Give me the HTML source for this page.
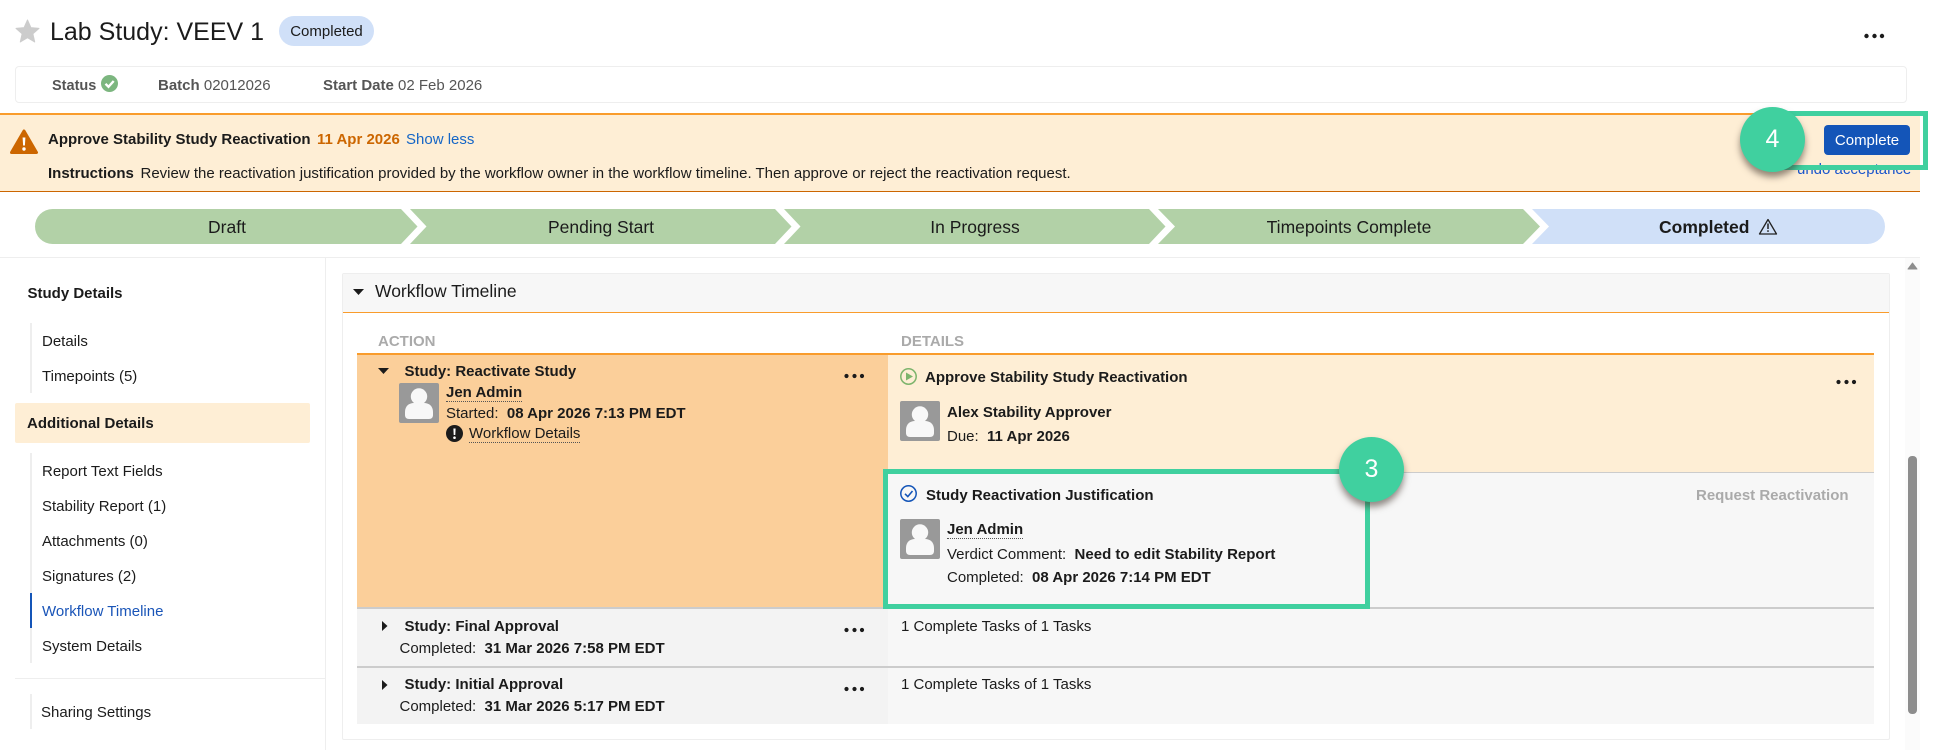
<!DOCTYPE html>
<html><head><meta charset="utf-8"><title>Lab Study: VEEV 1</title>
<style>
html,body{margin:0;padding:0;width:1935px;height:750px;overflow:hidden;background:#fff}
body{position:relative;font-family:"Liberation Sans",Arial,sans-serif;font-size:15px;color:#1b1b1b}
.t{position:absolute;white-space:nowrap;line-height:22px;height:22px}
.s{line-height:20px;height:20px}
.b{font-weight:bold}
.r{position:absolute}
.dot{border-bottom:1px dotted #555;height:auto;line-height:17px;padding-bottom:0}
svg{position:absolute;overflow:visible}
.circle{position:absolute;width:65px;height:65px;border-radius:50%;background:#40d09f;color:#fff;font-size:25px;line-height:65px;text-align:center;box-shadow:0 5px 7px rgba(60,50,40,.55)}
.box{position:absolute;border:5px solid #40d09f;box-sizing:border-box}
</style></head><body>

<!-- header -->
<svg style="left:0;top:0" width="60" height="60"><path d="M27.5 20l3.4 7.6 8.1.8-6.1 5.4 1.8 8.2-7.2-4.3-7.2 4.3 1.8-8.2L16 28.400l8.100-.8z" fill="#ccc" stroke="#ccc" stroke-linejoin="round"/></svg>
<div class="t" style="left:50px;top:18px;font-size:25px;line-height:28px;height:28px">Lab Study: VEEV 1</div>
<div class="r" style="left:279px;top:16px;width:95px;height:30px;border-radius:15px;background:#d0e0f8;text-align:center;line-height:32px">Completed</div>
<svg style="left:1860px;top:30px" width="30" height="12"><circle cx="6.500" cy="6" r="2.200" fill="#1b1b1b"/><circle cx="14.500" cy="6" r="2.200" fill="#1b1b1b"/><circle cx="22" cy="6" r="2.200" fill="#1b1b1b"/></svg>

<!-- status bar -->
<div class="r" style="left:15px;top:66px;width:1892px;height:37px;border:1px solid #eee;border-radius:4px;box-sizing:border-box"></div>
<div class="t s b" style="left:52px;top:76px;color:#555;font-size:14.500px">Status</div>
<svg style="left:101px;top:75px" width="18" height="18"><circle cx="8.500" cy="8.500" r="8.500" fill="#7cb67f"/><path d="M4.500 8.800l3 3 5.200-5.800" fill="none" stroke="#fff" stroke-width="2.400"/></svg>
<div class="t" style="left:158px;top:75px;color:#555"><b>Batch</b> 02012026</div>
<div class="t" style="left:323px;top:75px;color:#555"><b>Start Date</b> 02 Feb 2026</div>

<!-- banner -->
<div class="r" style="left:0;top:113px;width:1920px;height:79px;background:#feeed5;border-top:2px solid #f99c2c;border-bottom:1px solid #cc6600;box-sizing:border-box"></div>
<svg style="left:9px;top:128px" width="30" height="28"><path d="M15 3L27.500 24.500H2.500z" fill="#cc6600" stroke="#cc6600" stroke-width="3" stroke-linejoin="round"/><path d="M13.600 9.500h2.800l-.5 8h-1.800z" fill="#fff"/><circle cx="15" cy="21" r="1.700" fill="#fff"/></svg>
<div class="t b" style="left:48px;top:129px">Approve Stability Study Reactivation</div>
<div class="t b" style="left:317px;top:129px;color:#cc6600">11 Apr 2026</div>
<div class="t" style="left:406px;top:129px;color:#1566c6">Show less</div>
<div class="t b" style="left:48px;top:163px">Instructions</div>
<div class="t" style="left:140.500px;top:163px">Review the reactivation justification provided by the workflow owner in the workflow timeline. Then approve or reject the reactivation request.</div>

<!-- Complete -->
<div class="r" style="left:1824px;top:125px;width:86px;height:30px;border-radius:4px;background:#1455b8;color:#fff;text-align:center;line-height:32px">Complete</div>
<div class="t" style="left:1797px;top:159px;color:#1a55cc">undo acceptance</div>
<div class="box" style="left:1772px;top:111px;width:156px;height:59px"></div>
<div class="circle" style="left:1740px;top:107px">4</div>

<!-- stages -->
<svg style="left:0;top:0" width="1935" height="260">
<path d="M401 209L417.500 226.500L401 244H52.500A17.500 17.500 0 0 1 52.500 209Z" fill="#b2d1a7"/>
<path d="M410 209L426.500 226.500L410 244H775L791.500 226.500L775 209Z" fill="#b2d1a7"/>
<path d="M784 209L800.500 226.500L784 244H1149L1165.500 226.500L1149 209Z" fill="#b2d1a7"/>
<path d="M1158 209L1175 226.500L1158 244H1523L1540 226.500L1523 209Z" fill="#b2d1a7"/>
<path d="M1532 209L1549 226.500L1532 244H1867.500A17.500 17.500 0 0 0 1867.500 209Z" fill="#d0e0f8"/>
<path d="M1768 219.500L1776.500 234H1759.500Z" fill="none" stroke="#222" stroke-width="1.300" stroke-linejoin="round"/>
<path d="M1768 223.500v5.500M1768 230.300v1.600" stroke="#222" stroke-width="1.500"/>
</svg>
<div class="t s" style="left:127px;width:200px;top:217px;font-size:17.500px;text-align:center">Draft</div>
<div class="t s" style="left:501px;width:200px;top:217px;font-size:17.500px;text-align:center">Pending Start</div>
<div class="t s" style="left:875px;width:200px;top:217px;font-size:17.500px;text-align:center">In Progress</div>
<div class="t s" style="left:1249px;width:200px;top:217px;font-size:17.500px;text-align:center">Timepoints Complete</div>
<div class="t s b" style="left:1659px;top:217px;font-size:17.500px">Completed</div>

<!-- dividers -->
<div class="r" style="left:0;top:257px;width:1920px;height:1px;background:#eee"></div>
<div class="r" style="left:325px;top:258px;width:1px;height:492px;background:#eee"></div>

<!-- sidebar -->
<div class="t b" style="left:27.500px;top:283px">Study Details</div>
<div class="r" style="left:30px;top:323px;width:2px;height:70px;background:#eee"></div>
<div class="t" style="left:42px;top:331px">Details</div>
<div class="t" style="left:42px;top:366px">Timepoints (5)</div>
<div class="r" style="left:15px;top:403px;width:295px;height:40px;background:#feeed5;border-radius:2px"></div>
<div class="t b" style="left:27px;top:413px">Additional Details</div>
<div class="r" style="left:30px;top:453px;width:2px;height:210px;background:#eee"></div>
<div class="r" style="left:30px;top:593px;width:2px;height:35px;background:#1455b8"></div>
<div class="t" style="left:42px;top:461px">Report Text Fields</div>
<div class="t" style="left:42px;top:496px">Stability Report (1)</div>
<div class="t" style="left:42px;top:531px">Attachments (0)</div>
<div class="t" style="left:42px;top:566px">Signatures (2)</div>
<div class="t" style="left:42px;top:601px;color:#1a55b8">Workflow Timeline</div>
<div class="t" style="left:42px;top:636px">System Details</div>
<div class="r" style="left:15px;top:678px;width:310px;height:1px;background:#eee"></div>
<div class="r" style="left:30px;top:694px;width:2px;height:35px;background:#eee"></div>
<div class="t" style="left:41px;top:702px">Sharing Settings</div>

<!-- panel -->
<div class="r" style="left:342px;top:273px;width:1548px;height:467px;border:1px solid #eee;box-sizing:border-box;border-radius:2px"></div>
<div class="r" style="left:343px;top:274px;width:1546px;height:38px;background:#f7f7f7;border-bottom:1px solid #f99c2c"></div>
<svg style="left:353px;top:288px" width="12" height="8"><path d="M0 1H11L5.500 7Z" fill="#1b1b1b"/></svg>
<div class="t s" style="left:375px;top:281px;font-size:17.500px">Workflow Timeline</div>
<div class="t b" style="left:378px;top:331px;color:#aaa">ACTION</div>
<div class="t b" style="left:901px;top:331px;color:#aaa">DETAILS</div>

<!-- table -->
<div class="r" style="left:357px;top:353px;width:1517px;height:2px;background:#f99c2c"></div>
<div class="r" style="left:357px;top:355px;width:531px;height:252px;background:#fbcf9a"></div>
<div class="r" style="left:888px;top:355px;width:986px;height:117px;background:#feeed5"></div>
<div class="r" style="left:888px;top:472px;width:986px;height:1px;background:#ccc"></div>
<div class="r" style="left:888px;top:473px;width:986px;height:134px;background:#f7f7f7"></div>
<div class="r" style="left:357px;top:607px;width:1517px;height:2px;background:#ccc"></div>
<div class="r" style="left:357px;top:609px;width:531px;height:57px;background:#f3f3f3"></div>
<div class="r" style="left:888px;top:609px;width:986px;height:57px;background:#f7f7f7"></div>
<div class="r" style="left:357px;top:666px;width:1517px;height:2px;background:#ccc"></div>
<div class="r" style="left:357px;top:668px;width:531px;height:56px;background:#f3f3f3"></div>
<div class="r" style="left:888px;top:668px;width:986px;height:56px;background:#f7f7f7"></div>

<!-- action main -->
<svg style="left:378px;top:367px" width="12" height="8"><path d="M0 1H11L5.500 7Z" fill="#1b1b1b"/></svg>
<div class="t b" style="left:404.500px;top:361px">Study: Reactivate Study</div>
<svg style="left:399px;top:383px" width="40" height="40"><rect width="40" height="40" rx="2" fill="#999"/><circle cx="20" cy="13.500" r="8.200" fill="#f8f8f8"/><path d="M6 29c0-6 4-9 9-9h10c5 0 9 3 9 9v3c0 2.500-1.500 4-4 4H10c-2.500 0-4-1.500-4-4z" fill="#f8f8f8"/></svg>
<div class="t b dot" style="left:446px;top:384px">Jen Admin</div>
<div class="t" style="left:446px;top:403px">Started:&nbsp; <b>08 Apr 2026 7:13 PM EDT</b></div>
<svg style="left:446px;top:425px" width="18" height="18"><circle cx="8.500" cy="8.500" r="8.500" fill="#1b1b1b"/><path d="M7.400 3.500h2.200l-.3 6.500H7.700z" fill="#fff"/><circle cx="8.500" cy="12.700" r="1.300" fill="#fff"/></svg>
<div class="t dot" style="left:469px;top:425px">Workflow Details</div>
<svg style="left:840px;top:370px" width="30" height="12"><circle cx="6.500" cy="6" r="2.100" fill="#1b1b1b"/><circle cx="14.500" cy="6" r="2.100" fill="#1b1b1b"/><circle cx="22" cy="6" r="2.100" fill="#1b1b1b"/></svg>

<!-- details top -->
<svg style="left:900px;top:368px" width="18" height="18"><circle cx="8.500" cy="8.500" r="7.700" fill="none" stroke="#7db46c" stroke-width="1.500"/><path d="M6 4.500L13 8.500L6 12.500Z" fill="#7db46c"/></svg>
<div class="t b" style="left:925px;top:367px">Approve Stability Study Reactivation</div>
<svg style="left:900px;top:401px" width="40" height="40"><rect width="40" height="40" rx="2" fill="#999"/><circle cx="20" cy="13.500" r="8.200" fill="#f8f8f8"/><path d="M6 29c0-6 4-9 9-9h10c5 0 9 3 9 9v3c0 2.500-1.500 4-4 4H10c-2.500 0-4-1.500-4-4z" fill="#f8f8f8"/></svg>
<div class="t b" style="left:947px;top:402px">Alex Stability Approver</div>
<div class="t" style="left:947px;top:426px">Due:&nbsp; <b>11 Apr 2026</b></div>
<svg style="left:1832px;top:376px" width="30" height="12"><circle cx="6.500" cy="6" r="2.100" fill="#1b1b1b"/><circle cx="14.500" cy="6" r="2.100" fill="#1b1b1b"/><circle cx="22" cy="6" r="2.100" fill="#1b1b1b"/></svg>

<!-- details bottom -->
<svg style="left:900px;top:485px" width="18" height="18"><circle cx="8.500" cy="8.500" r="7.700" fill="none" stroke="#1455b8" stroke-width="1.500"/><path d="M5 8.800l2.800 2.800L12.500 6" fill="none" stroke="#1455b8" stroke-width="1.600"/></svg>
<div class="t b" style="left:926px;top:485px">Study Reactivation Justification</div>
<svg style="left:900px;top:519px" width="40" height="40"><rect width="40" height="40" rx="2" fill="#999"/><circle cx="20" cy="13.500" r="8.200" fill="#f8f8f8"/><path d="M6 29c0-6 4-9 9-9h10c5 0 9 3 9 9v3c0 2.500-1.500 4-4 4H10c-2.500 0-4-1.500-4-4z" fill="#f8f8f8"/></svg>
<div class="t b dot" style="left:947px;top:522px;line-height:16px">Jen Admin</div>
<div class="t" style="left:947px;top:544px">Verdict Comment:&nbsp; <b>Need to edit Stability Report</b></div>
<div class="t" style="left:947px;top:567px">Completed:&nbsp; <b>08 Apr 2026 7:14 PM EDT</b></div>
<div class="t b" style="left:1696px;top:485px;color:#aaa">Request Reactivation</div>

<!-- rows -->
<svg style="left:382px;top:621px" width="7" height="11"><path d="M0 0V10L5.500 5Z" fill="#1b1b1b"/></svg>
<div class="t b" style="left:404.500px;top:616px">Study: Final Approval</div>
<div class="t" style="left:399.500px;top:638px">Completed:&nbsp; <b>31 Mar 2026 7:58 PM EDT</b></div>
<svg style="left:840px;top:624px" width="30" height="12"><circle cx="6.500" cy="6" r="2.100" fill="#1b1b1b"/><circle cx="14.500" cy="6" r="2.100" fill="#1b1b1b"/><circle cx="22" cy="6" r="2.100" fill="#1b1b1b"/></svg>
<div class="t" style="left:901px;top:616px">1 Complete Tasks of 1 Tasks</div>

<svg style="left:382px;top:680px" width="7" height="11"><path d="M0 0V10L5.500 5Z" fill="#1b1b1b"/></svg>
<div class="t b" style="left:404.500px;top:674px">Study: Initial Approval</div>
<div class="t" style="left:399.500px;top:696px">Completed:&nbsp; <b>31 Mar 2026 5:17 PM EDT</b></div>
<svg style="left:840px;top:683px" width="30" height="12"><circle cx="6.500" cy="6" r="2.100" fill="#1b1b1b"/><circle cx="14.500" cy="6" r="2.100" fill="#1b1b1b"/><circle cx="22" cy="6" r="2.100" fill="#1b1b1b"/></svg>
<div class="t" style="left:901px;top:674px">1 Complete Tasks of 1 Tasks</div>

<!-- callout 3 -->
<div class="box" style="left:883px;top:469px;width:487px;height:140px"></div>
<div class="circle" style="left:1339px;top:437px">3</div>

<!-- scrollbar -->
<div class="r" style="left:1905px;top:258px;width:15px;height:492px;background:#fbfbfb"></div>
<svg style="left:1905px;top:258px" width="15" height="16"><path d="M3 11L7.500 5L12 11Z" fill="#8d8d8d" stroke="#8d8d8d" stroke-linejoin="round"/></svg>
<div class="r" style="left:1908px;top:456px;width:9px;height:258px;background:#8d8d8d;border-radius:4px"></div>
</body></html>
